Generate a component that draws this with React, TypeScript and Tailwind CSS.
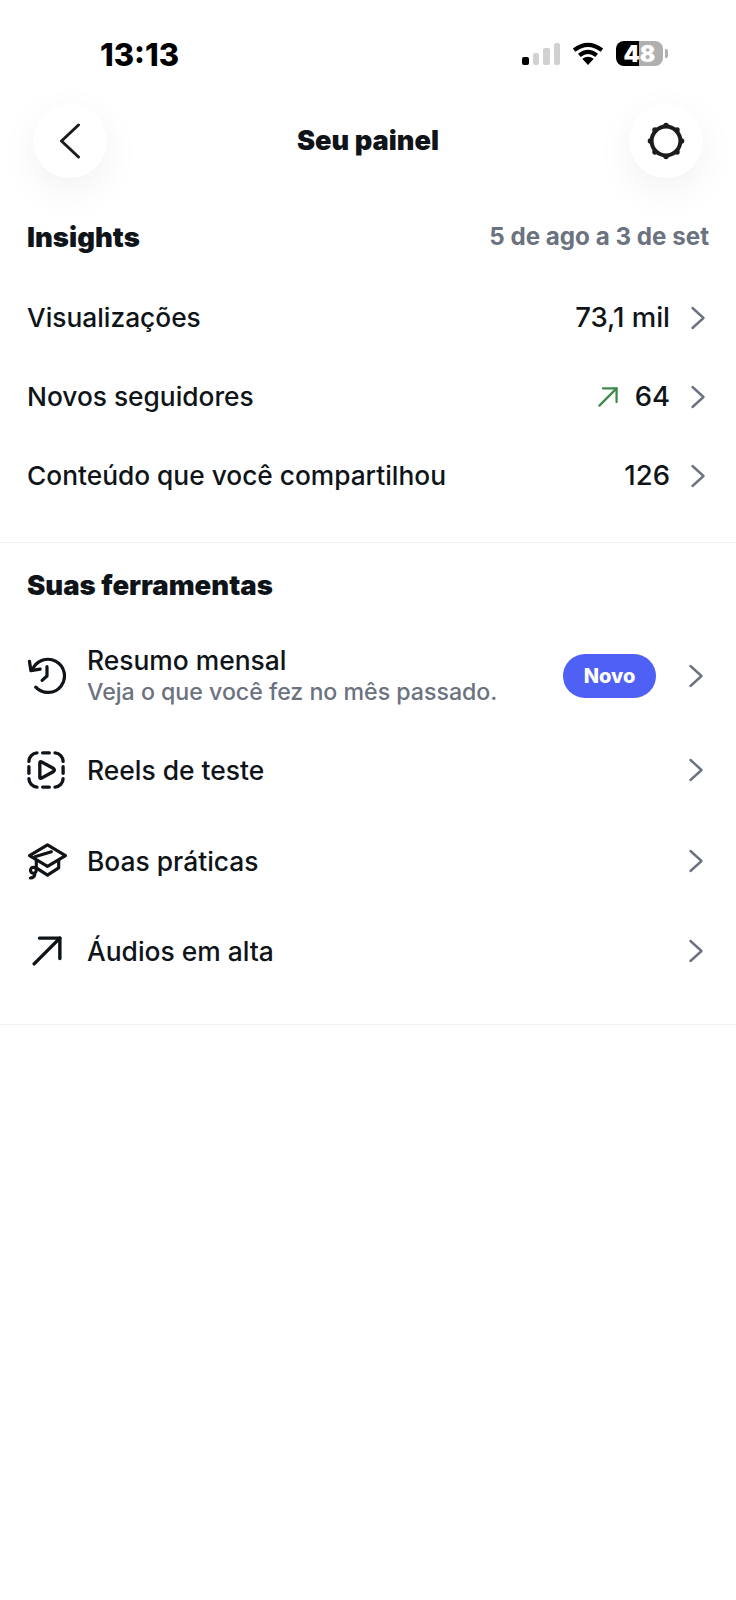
import React from "react";

const INK = "#0f1419";

function Chevron({ className = "" }: { className?: string }) {
  return (
    <svg width="16" height="24" viewBox="0 0 16 24" fill="none" className={className}>
      <path d="M2.5 2 L13.5 12 L2.5 22" stroke="#6b7280" strokeWidth="2.4" strokeLinecap="round" strokeLinejoin="round" />
    </svg>
  );
}

function HistoryIcon() {
  return (
    <svg width="39" height="39" viewBox="0 0 40 40" fill="none" stroke={INK} strokeWidth="3.3" strokeLinecap="round" strokeLinejoin="round">
      <path d="M5.5 14.5 A17 17 0 1 1 9 32" />
      <path d="M2.5 5.5 L4 15 L13.5 13.5" />
      <path d="M20.5 11 V20.5 L15.5 25" />
    </svg>
  );
}

function ReelsTestIcon() {
  return (
    <svg width="38" height="38" viewBox="0 0 40 40" fill="none" stroke={INK} strokeWidth="3.5" strokeLinecap="round" strokeLinejoin="round">
      <path d="M2 11 A9 9 0 0 1 10.5 2" />
      <path d="M16.5 2 H23.5" />
      <path d="M29.5 2 A9 9 0 0 1 38 11" />
      <path d="M38 16.5 V23.5" />
      <path d="M38 29 A9 9 0 0 1 29.5 38" />
      <path d="M23.5 38 H16.5" />
      <path d="M10.5 38 A9 9 0 0 1 2 29" />
      <path d="M2 23.5 V16.5" />
      <path d="M13.5 12.5 Q13.5 10.5 15.5 11.5 L28 18.5 Q29.5 20 28 21.5 L15.5 28.5 Q13.5 29.5 13.5 27.5 Z" />
    </svg>
  );
}

function CapIcon() {
  return (
    <svg width="41" height="37" viewBox="0 0 42 38" fill="none" stroke={INK} strokeWidth="3.2" strokeLinecap="round" strokeLinejoin="round">
      <path d="M21 2 L39.5 13 L21 24 L2.5 13 Z" />
      <path d="M9.5 17.5 V25.5 L21 33 L32.5 25.5 V17.5" />
      <path d="M8 14 L25 9" />
      <circle cx="6.5" cy="28" r="3" />
      <path d="M8 32 Q7.5 35.5 3.5 36" />
    </svg>
  );
}

function ArrowUpRight({ size, color, width }: { size: number; color: string; width: number }) {
  return (
    <svg width={size} height={size} viewBox="0 0 28 28" fill="none" stroke={color} strokeWidth={width} strokeLinecap="round" strokeLinejoin="round">
      <path d="M2 26 L26 2" />
      <path d="M7 2 H26 V21" />
    </svg>
  );
}

// Gear drawn as a thick ring with eight knobs around it.
function SettingsIcon() {
  const knobs = [0, 45, 90, 135, 180, 225, 270, 315];
  return (
    <svg width="38" height="38" viewBox="0 0 38 38" fill="none">
      <circle cx="19" cy="19" r="14.4" stroke="#1c1c1e" strokeWidth="4" />
      {knobs.map((deg) => (
        <circle
          key={deg}
          cx={19 + 15.6 * Math.sin((deg * Math.PI) / 180)}
          cy={19 - 15.6 * Math.cos((deg * Math.PI) / 180)}
          r="2.7"
          fill="#1c1c1e"
        />
      ))}
    </svg>
  );
}

function StatusBar() {
  return (
    <div className="flex h-[104px] items-start justify-between pt-[37px] pl-[100px] pr-[68px]">
      <span className="text-[31px] leading-[35px] font-extrabold text-black">13:13</span>
      <div className="flex items-center gap-[12px] pt-[4px]">
        <div className="flex h-[22px] items-end gap-[4px]">
          <span className="h-[8px] w-[6.5px] rounded-[2px] bg-black" />
          <span className="h-[12px] w-[6.5px] rounded-[2px] bg-[#d1d1d1]" />
          <span className="h-[17px] w-[6.5px] rounded-[2px] bg-[#d1d1d1]" />
          <span className="h-[22px] w-[6.5px] rounded-[2px] bg-[#d1d1d1]" />
        </div>
        <svg width="32" height="23" viewBox="0 0 33 24" fill="none" stroke="#000" strokeWidth="4.4">
          <path d="M2 8.5 Q16.5 -2.5 31 8.5" />
          <path d="M7.5 14 Q16.5 6.5 25.5 14" />
          <path d="M16.5 24 L10.5 17.6 Q16.5 13 22.5 17.6 Z" fill="#000" stroke="none" />
        </svg>
        <div className="flex items-center gap-[2px]">
          <div className="relative flex h-[25px] w-[47px]">
            <div className="w-[23px] rounded-l-[8px] bg-black" />
            <div className="flex-1 rounded-r-[8px] bg-[#b0b0b0]" />
            <span className="absolute inset-x-0 top-[1px] flex justify-center text-[23px] leading-[25px] font-black text-white">48</span>
          </div>
          <span className="h-[9px] w-[3px] rounded-r-[2px] bg-[#b0b0b0]" />
        </div>
      </div>
    </div>
  );
}

function RoundButton({ children }: { children: React.ReactNode }) {
  return (
    <button className="flex h-[74px] w-[74px] items-center justify-center rounded-full bg-white shadow-[0_12px_40px_rgba(0,0,0,0.06)]">
      {children}
    </button>
  );
}

function StatRow({ label, value, trend }: { label: string; value: string; trend?: boolean }) {
  return (
    <div className="flex h-[79px] items-center justify-between pl-[27px] pr-[30px]">
      <span className="text-[26.3px] font-medium text-[#0f1419]">{label}</span>
      <div className="flex items-center">
        {trend && (
          <span className="mr-[17px]">
            <ArrowUpRight size={20} color="#3d8b4a" width={3.2} />
          </span>
        )}
        <span className="text-[27.5px] font-medium text-[#0f1419]">{value}</span>
        <Chevron className="ml-[20px]" />
      </div>
    </div>
  );
}

function ToolRow({ icon, title, subtitle, badge, height }: { icon: React.ReactNode; title: string; subtitle?: string; badge?: boolean; height: string }) {
  return (
    <div className={`flex items-center pl-[27px] pr-[32px] ${height}`}>
      <div className="flex w-[60px] shrink-0 items-center">{icon}</div>
      <div className={`min-w-0 flex-1 ${subtitle ? "pt-[1px]" : ""}`}>
        <div className="text-[26.4px] leading-[31px] font-medium text-[#0f1419]">{title}</div>
        {subtitle && <div className="mt-[2px] text-[23.15px] leading-[29px] font-medium text-[#6b7280]">{subtitle}</div>}
      </div>
      {badge && (
        <span className="mr-[32px] flex h-[44px] w-[93px] items-center justify-center rounded-full bg-[#4f61f4] text-[20px] font-extrabold text-white">
          Novo
        </span>
      )}
      <Chevron />
    </div>
  );
}

export default function App() {
  return (
    <div className="min-h-[1600px] w-[736px] bg-white [font-family:Inter,'Noto_Sans',sans-serif]">
      <StatusBar />

      <header className="flex items-center justify-between pl-[33px] pr-[33px]">
        <RoundButton>
          <svg width="22" height="36" viewBox="0 0 22 36" fill="none" stroke="#1c1c1e" strokeWidth="3" strokeLinecap="round" strokeLinejoin="round">
            <path d="M19.5 2 L2.5 18 L19.5 34" />
          </svg>
        </RoundButton>
        <h1 className="text-[27.2px] font-black text-[#0f1419]">Seu painel</h1>
        <RoundButton>
          <SettingsIcon />
        </RoundButton>
      </header>

      <section className="border-b border-[#eff1f3] pb-[27px]">
        <div className="flex items-center justify-between pt-[41px] pr-[27px] pl-[27px]">
          <h2 className="text-[27.5px] leading-[36px] font-black text-[#0f1419]">Insights</h2>
          <span className="text-[24.2px] leading-[36px] font-bold text-[#6b7280]">5 de ago a 3 de set</span>
        </div>
        <div className="pt-[23px]">
          <StatRow label="Visualizações" value="73,1 mil" />
          <StatRow label="Novos seguidores" value="64" trend />
          <StatRow label="Conteúdo que você compartilhou" value="126" />
        </div>
      </section>

      <section className="border-b border-[#eff1f3] pb-[28px]">
        <h2 className="pt-[24px] pl-[27px] text-[27.5px] leading-[36px] font-black text-[#0f1419]">Suas ferramentas</h2>
        <div className="pt-[24px]">
          <ToolRow height="h-[97px]" icon={<HistoryIcon />} title="Resumo mensal" subtitle="Veja o que você fez no mês passado." badge />
          <ToolRow height="h-[92px]" icon={<ReelsTestIcon />} title="Reels de teste" />
          <ToolRow height="h-[90px]" icon={<CapIcon />} title="Boas práticas" />
          <ToolRow height="h-[90px]" icon={<span className="pl-[5px]"><ArrowUpRight size={30} color={INK} width={3.2} /></span>} title="Áudios em alta" />
        </div>
      </section>
    </div>
  );
}
